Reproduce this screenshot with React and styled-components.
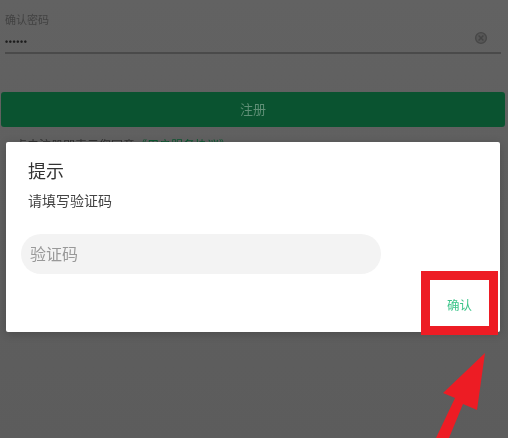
import React from "react";
import styled, { createGlobalStyle } from "styled-components";

const GlobalStyle = createGlobalStyle`
  html, body {
    margin: 0;
    padding: 0;
    background: #5f5f5f;
  }
  body {
    font-family: "Noto Sans CJK SC", "Liberation Sans", sans-serif;
    overflow: hidden;
  }
`;

const Screen = styled.div`
  position: relative;
  width: 508px;
  height: 438px;
  overflow: hidden;
  background: linear-gradient(#626262, #5c5c5c);
  filter: blur(0.5px);
`;

const Form = styled.div`
  display: flex;
  flex-direction: column;
  padding: 12px 1px 0 1px;
`;

const Field = styled.div`
  display: flex;
  flex-direction: column;
  margin: 0 6px 0 4px;
  height: 40px;
  border-bottom: 2px solid #4a4a4a;
`;

const FieldLabel = styled.label`
  font-size: 11px;
  line-height: 14px;
  color: #424242;
`;

const FieldRow = styled.div`
  display: flex;
  align-items: center;
  justify-content: space-between;
  padding-right: 13px;
  height: 20px;
  margin-top: 2px;
`;

const Dots = styled.span`
  font-family: "Liberation Sans", sans-serif;
  font-size: 9px;
  font-weight: 700;
  letter-spacing: 0.6px;
  color: #1c1c1c;
  padding-top: 8px;
`;

const SubmitButton = styled.button`
  margin-top: 38px;
  height: 35px;
  width: 504px;
  padding: 0 0 2px;
  border: 0;
  border-radius: 3px;
  background: #0a5330;
  color: #5f8f76;
  font-family: inherit;
  font-size: 13px;
`;

const Agreement = styled.p`
  margin: 10px 0 0 14px;
  font-size: 12px;
  line-height: 16px;
  color: #303030;

  span {
    color: #0b5730;
  }
`;

const Dialog = styled.div`
  position: absolute;
  left: 6px;
  top: 142px;
  width: 494px;
  height: 190px;
  box-sizing: border-box;
  padding: 16px 15px 0;
  display: flex;
  flex-direction: column;
  background: #ffffff;
  border-radius: 2px;
  box-shadow: 0 2px 10px rgba(0, 0, 0, 0.2);
`;

const DialogTitle = styled.h2`
  margin: 0 0 0 7px;
  font-size: 18px;
  font-weight: 400;
  line-height: 24px;
  color: #333333;
`;

const DialogMessage = styled.p`
  margin: 8px 0 0 7px;
  font-size: 14px;
  line-height: 20px;
  color: #444444;
`;

const CodeInput = styled.input`
  margin-top: 24px;
  width: 360px;
  height: 40px;
  box-sizing: border-box;
  padding: 0 9px 2px;
  border: 0;
  border-radius: 20px;
  outline: none;
  background: #f3f3f3;
  font-family: inherit;
  font-size: 16px;

  &::placeholder {
    color: #999999;
    opacity: 1;
  }
`;

const ConfirmBar = styled.div`
  display: flex;
  justify-content: flex-end;
  margin-top: 21px;
  padding-right: 13px;
`;

const ConfirmButton = styled.button`
  border: 0;
  background: none;
  padding: 0;
  font-family: inherit;
  font-size: 12.5px;
  line-height: 20px;
  color: #3cc48a;
`;

const Highlight = styled.div`
  position: absolute;
  left: 421px;
  top: 271px;
  width: 59px;
  height: 46px;
  border: 9px solid #ed1c24;
`;

const Arrow = styled.svg`
  position: absolute;
  left: 0;
  top: 0;
  pointer-events: none;
`;

export default function App() {
  return (
    <>
      <GlobalStyle />
      <Screen>
        <Form>
          <Field>
            <FieldLabel>确认密码</FieldLabel>
            <FieldRow>
              <Dots>••••••</Dots>
              <svg width="14" height="14" viewBox="0 0 14 14">
                <circle cx="7" cy="7" r="5.4" fill="#575757" stroke="#484848" strokeWidth="1.4" />
                <path d="M4.6 4.6l4.8 4.8M9.4 4.6l-4.8 4.8" stroke="#444444" strokeWidth="1.4" />
              </svg>
            </FieldRow>
          </Field>
          <SubmitButton>注册</SubmitButton>
          <Agreement>
            点击注册即表示您同意<span>《用户服务协议》</span>
          </Agreement>
        </Form>

        <Dialog>
          <DialogTitle>提示</DialogTitle>
          <DialogMessage>请填写验证码</DialogMessage>
          <CodeInput placeholder="验证码" />
          <ConfirmBar>
            <ConfirmButton>确认</ConfirmButton>
          </ConfirmBar>
        </Dialog>

        <Highlight />
        <Arrow width="508" height="438" viewBox="0 0 508 438">
          <path d="M485 353L477 410L463 404L449 438L436 438L455 398L443 393Z" fill="#ed1c24" />
        </Arrow>
      </Screen>
    </>
  );
}
